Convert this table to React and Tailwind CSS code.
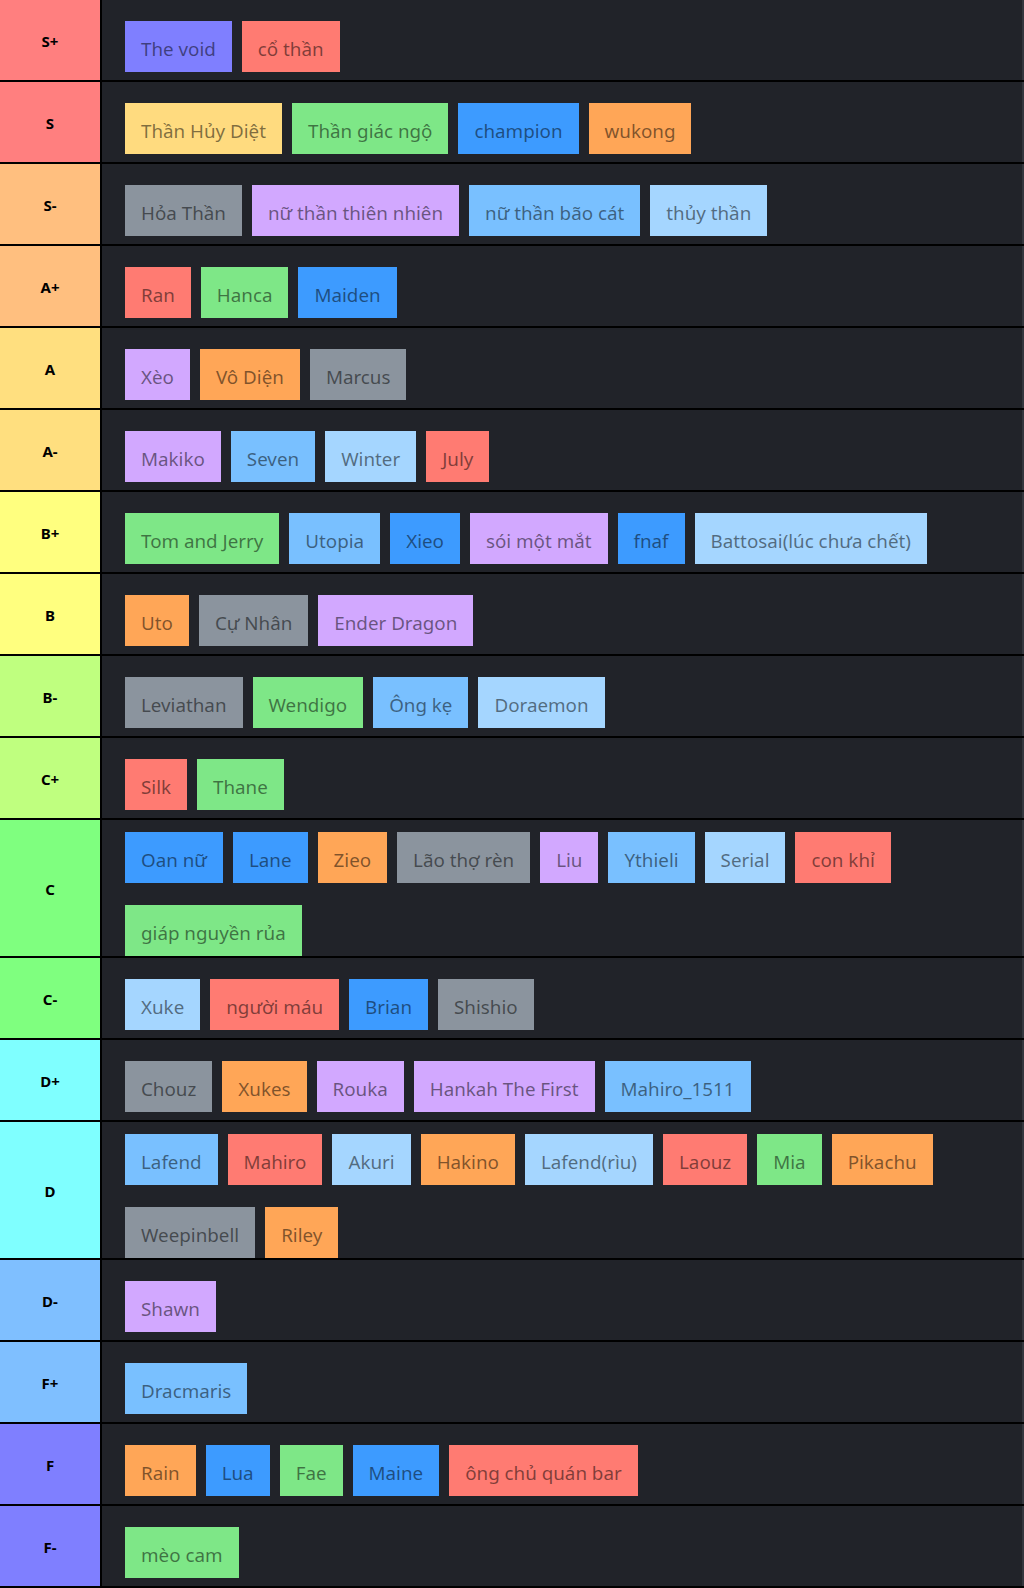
import React from "react";

const C = {
  purple: "bg-[#d2a8ff]",
  indigo: "bg-[#7f7fff]",
  red: "bg-[#ff7b72]",
  yellow: "bg-[#ffdb7f]",
  green: "bg-[#7ee787]",
  blue: "bg-[#3d9bff]",
  orange: "bg-[#ffa657]",
  gray: "bg-[#8b949e]",
  mid: "bg-[#79c0ff]",
  light: "bg-[#a5d6ff]",
};

const tiers = [
  { label: "S+", bg: "bg-[#ff7f7f]", items: [["The void", "indigo"], ["cổ thần", "red"]] },
  { label: "S", bg: "bg-[#ff7f7f]", items: [["Thần Hủy Diệt", "yellow"], ["Thần giác ngộ", "green"], ["champion", "blue"], ["wukong", "orange"]] },
  { label: "S-", bg: "bg-[#ffbf7f]", items: [["Hỏa Thần", "gray"], ["nữ thần thiên nhiên", "purple"], ["nữ thần bão cát", "mid"], ["thủy thần", "light"]] },
  { label: "A+", bg: "bg-[#ffbf7f]", items: [["Ran", "red"], ["Hanca", "green"], ["Maiden", "blue"]] },
  { label: "A", bg: "bg-[#ffdf7f]", items: [["Xèo", "purple"], ["Vô Diện", "orange"], ["Marcus", "gray"]] },
  { label: "A-", bg: "bg-[#ffdf7f]", items: [["Makiko", "purple"], ["Seven", "mid"], ["Winter", "light"], ["July", "red"]] },
  { label: "B+", bg: "bg-[#ffff7f]", items: [["Tom and Jerry", "green"], ["Utopia", "mid"], ["Xieo", "blue"], ["sói một mắt", "purple"], ["fnaf", "blue"], ["Battosai(lúc chưa chết)", "light"]] },
  { label: "B", bg: "bg-[#ffff7f]", items: [["Uto", "orange"], ["Cự Nhân", "gray"], ["Ender Dragon", "purple"]] },
  { label: "B-", bg: "bg-[#bfff7f]", items: [["Leviathan", "gray"], ["Wendigo", "green"], ["Ông kẹ", "mid"], ["Doraemon", "light"]] },
  { label: "C+", bg: "bg-[#bfff7f]", items: [["Silk", "red"], ["Thane", "green"]] },
  { label: "C", bg: "bg-[#7fff7f]", multi: true, items: [["Oan nữ", "blue"], ["Lane", "blue"], ["Zieo", "orange"], ["Lão thợ rèn", "gray"], ["Liu", "purple"], ["Ythieli", "mid"], ["Serial", "light"], ["con khỉ", "red"], ["giáp nguyền rủa", "green"]] },
  { label: "C-", bg: "bg-[#7fff7f]", items: [["Xuke", "light"], ["người máu", "red"], ["Brian", "blue"], ["Shishio", "gray"]] },
  { label: "D+", bg: "bg-[#7fffff]", items: [["Chouz", "gray"], ["Xukes", "orange"], ["Rouka", "purple"], ["Hankah The First", "purple"], ["Mahiro_1511", "mid"]] },
  { label: "D", bg: "bg-[#7fffff]", multi: true, items: [["Lafend", "mid"], ["Mahiro", "red"], ["Akuri", "light"], ["Hakino", "orange"], ["Lafend(rìu)", "light"], ["Laouz", "red"], ["Mia", "green"], ["Pikachu", "orange"], ["Weepinbell", "gray"], ["Riley", "orange"]] },
  { label: "D-", bg: "bg-[#7fbfff]", items: [["Shawn", "purple"]] },
  { label: "F+", bg: "bg-[#7fbfff]", items: [["Dracmaris", "mid"]] },
  { label: "F", bg: "bg-[#7f7fff]", items: [["Rain", "orange"], ["Lua", "blue"], ["Fae", "green"], ["Maine", "blue"], ["ông chủ quán bar", "red"]] },
  { label: "F-", bg: "bg-[#7f7fff]", items: [["mèo cam", "green"]] },
];

function Tier({ t }) {
  return (
    <div className={`flex border-b-2 border-black ${t.multi ? "h-[138px]" : "h-[82px]"}`}>
      <div className={`${t.bg} w-[100px] shrink-0 flex items-center justify-center pt-[2px] text-[15px] font-bold text-black`}>
        {t.label}
      </div>
      <div className={`flex-1 bg-[#212329] border-l-2 border-black border-r-2 border-r-[#33363d] flex flex-wrap content-start gap-x-[10px] gap-y-[22px] pl-[23px] pr-[40px] ${t.multi ? "pt-[12px]" : "pt-[21px]"}`}>
        {t.items.map(([name, c]) => (
          <div
            key={name}
            className={`${C[c]} h-[51px] px-[16px] pt-[5px] flex items-center text-[18.8px] text-black/50 whitespace-nowrap`}
          >
            {name}
          </div>
        ))}
      </div>
    </div>
  );
}

export default function App() {
  return (
    <div className="w-[1024px] bg-black font-['Noto_Sans','Open_Sans',sans-serif]">
      {tiers.map((t) => (
        <Tier key={t.label} t={t} />
      ))}
    </div>
  );
}
